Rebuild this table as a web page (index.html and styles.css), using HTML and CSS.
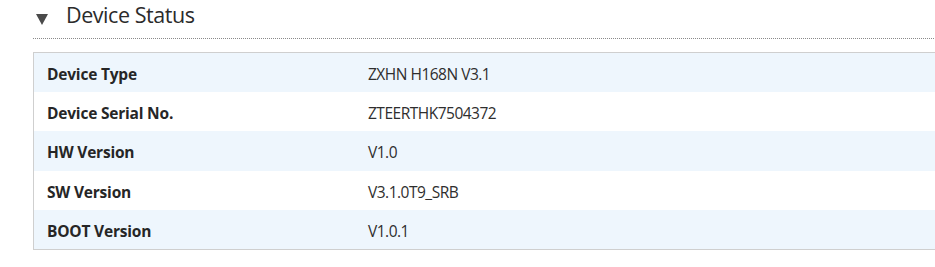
FILE: index.html
```html
<!DOCTYPE html>
<html>
<head>
<meta charset="utf-8">
<link rel="stylesheet" href="styles.css">
</head>
<body>
<div class="page">
  <div class="section-head">
    <span class="caret"></span>
    <h1 class="title">Device Status</h1>
  </div>
  <div class="info-table">
    <div class="row alt"><div class="label">Device Type</div><div class="value">ZXHN H168N V3.1</div></div>
    <div class="row"><div class="label">Device Serial No.</div><div class="value">ZTEERTHK7504372</div></div>
    <div class="row alt tall"><div class="label">HW Version</div><div class="value">V1.0</div></div>
    <div class="row"><div class="label">SW Version</div><div class="value">V3.1.0T9_SRB</div></div>
    <div class="row alt"><div class="label">BOOT Version</div><div class="value">V1.0.1</div></div>
  </div>
</div>
</body>
</html>
```
FILE: styles.css
```css
html, body {
  margin: 0;
  padding: 0;
  background: #ffffff;
  overflow: hidden;
}
body {
  font-family: "Open Sans", "Noto Sans", sans-serif;
  color: #333333;
}
.page {
  width: 1100px;
}
.section-head {
  display: flex;
  align-items: center;
  height: 38px;
  margin-left: 33px;
  padding-left: 3px;
  border-bottom: 1px dotted #8a8a8a;
}
.caret {
  width: 0;
  height: 0;
  border-left: 6px solid transparent;
  border-right: 6px solid transparent;
  border-top: 11px solid #4a4a4a;
  margin-top: 1px;
}
.title {
  margin: 0 0 0 18px;
  font-size: 21.5px;
  letter-spacing: -0.45px;
  font-weight: normal;
  color: #2b2b2b;
  line-height: 1;
  padding-bottom: 8px;
}
.info-table {
  margin: 13px 0 0 33px;
  border: 1px solid #cfcfcf;
  border-right: none;
  display: flex;
  flex-direction: column;
}
.row {
  display: flex;
  align-items: center;
  height: 39px;
  background: #ffffff;
}
.row.tall {
  height: 40px;
}
.row.alt {
  background: #eef6fd;
}
.label {
  width: 321px;
  padding-left: 13px;
  font-weight: bold;
  font-size: 15.5px;
  letter-spacing: -0.2px;
  color: #262626;
  padding-top: 2px;
}
.value {
  font-size: 15.5px;
  letter-spacing: -0.5px;
  color: #2e2e2e;
  padding-top: 2px;
}
```
